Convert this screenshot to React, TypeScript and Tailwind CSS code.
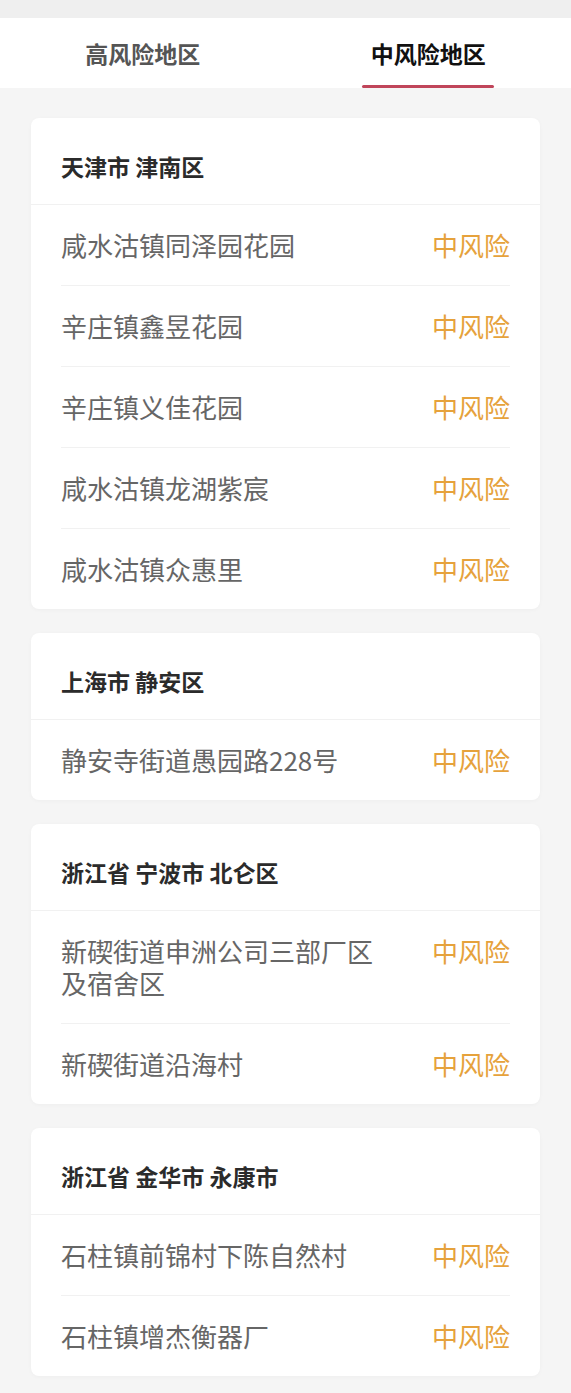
const FONT = '"Noto Sans CJK SC", "Noto Sans", sans-serif'

interface Area {
  title: string
  places: string[]
}

const AREAS: Area[] = [
  {
    title: '天津市 津南区',
    places: ['咸水沽镇同泽园花园', '辛庄镇鑫昱花园', '辛庄镇义佳花园', '咸水沽镇龙湖紫宸', '咸水沽镇众惠里'],
  },
  { title: '上海市 静安区', places: ['静安寺街道愚园路228号'] },
  { title: '浙江省 宁波市 北仑区', places: ['新碶街道申洲公司三部厂区及宿舍区', '新碶街道沿海村'] },
  { title: '浙江省 金华市 永康市', places: ['石柱镇前锦村下陈自然村', '石柱镇增杰衡器厂'] },
]

function AreaCard({ area }: { area: Area }) {
  return (
    <div className="bg-white rounded-lg shadow-[0_1px_4px_rgba(0,0,0,0.03)]">
      <div className="px-[30px] pt-8 pb-[22px] border-b border-[#f1f1f1]">
        <span className="text-[23px] leading-[32px] font-bold text-[#2b2b2b]">{area.title}</span>
      </div>
      <div className="px-[30px]">
        {area.places.map((p, i) => (
          <div
            key={p}
            className={`flex items-start justify-between gap-10 py-6 ${i > 0 ? 'border-t border-[#f1f1f1]' : ''}`}
          >
            <span className="flex-1 text-[26px] leading-[32px] text-[#666666]">{p}</span>
            <span className="shrink-0 text-[26px] leading-[32px] text-[#e6a23c]">中风险</span>
          </div>
        ))}
      </div>
    </div>
  )
}

export default function App() {
  return (
    <div className="min-h-[1393px] bg-[#f5f5f5]" style={{ fontFamily: FONT }}>
      <div className="h-[18px] bg-[#efefef]" />
      <div className="flex h-[70px] bg-white">
        <div className="flex-1 flex items-center justify-center">
          <span className="text-[23px] font-semibold text-[#555555]">高风险地区</span>
        </div>
        <div className="flex-1 flex flex-col items-center justify-end">
          <span className="text-[23px] font-bold text-[#111111] mb-[15px]">中风险地区</span>
          <div className="w-[132px] h-[3px] bg-[#c0455a] rounded-full" />
        </div>
      </div>
      <div className="flex flex-col gap-6 px-[31px] pt-[30px] pb-4">
        {AREAS.map(a => (
          <AreaCard key={a.title} area={a} />
        ))}
      </div>
    </div>
  )
}
